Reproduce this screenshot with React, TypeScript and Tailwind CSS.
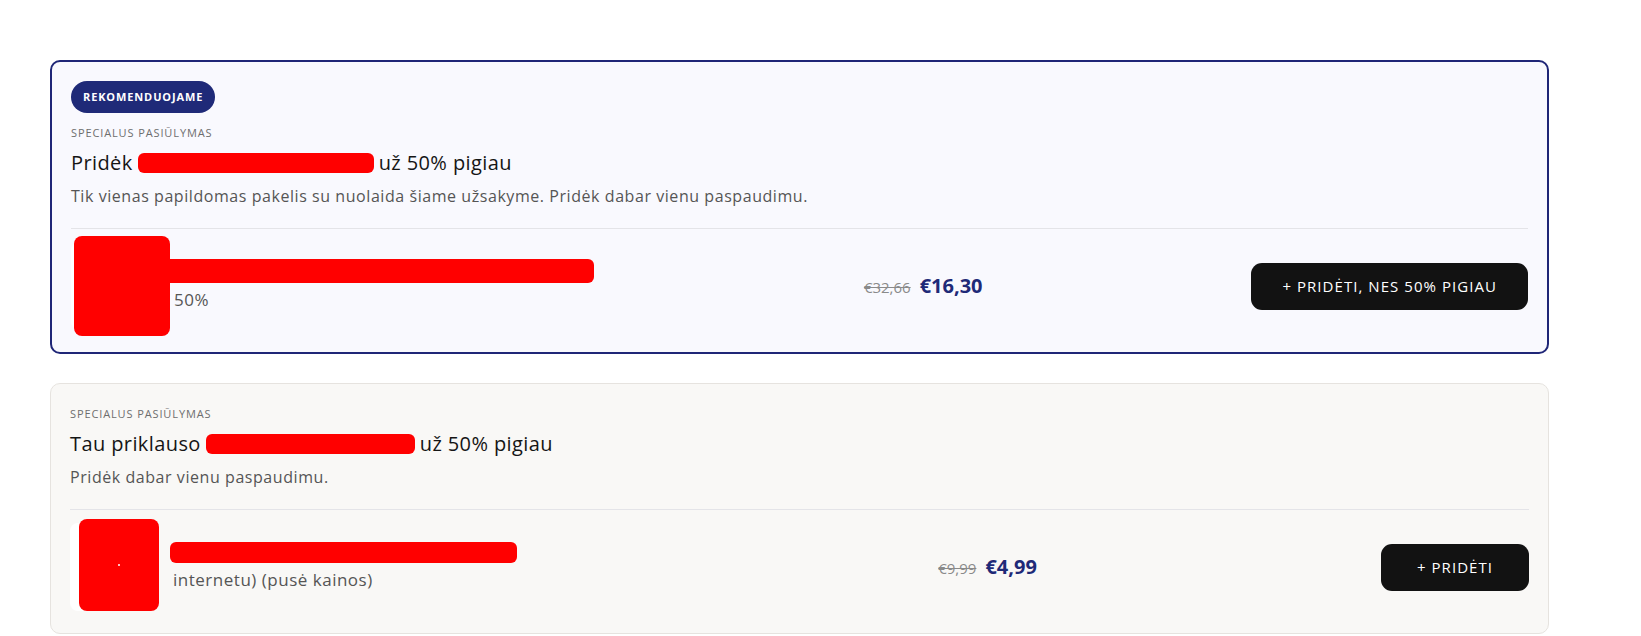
import React from 'react';

type Offer = {
  recommended?: boolean;
  titleStart: string;
  titleEnd: string;
  titleRedact: number;
  description: string;
  subtitle: string;
  nameRedact: { w: number; h: number; ml: number };
  imageRedact: { x: number; y: number; w: number; h: number; dot?: boolean };
  oldPrice: string;
  price: string;
  cta: string;
};

const offers: Offer[] = [
  {
    recommended: true,
    titleStart: 'Pridėk',
    titleEnd: 'už 50% pigiau',
    titleRedact: 236,
    description:
      'Tik vienas papildomas pakelis su nuolaida šiame užsakyme. Pridėk dabar vienu paspaudimu.',
    subtitle: '50%',
    nameRedact: { w: 433, h: 24, ml: -13 },
    imageRedact: { x: 3, y: -6, w: 96, h: 100 },
    oldPrice: '€32,66',
    price: '€16,30',
    cta: '+ Pridėti, nes 50% pigiau',
  },
  {
    titleStart: 'Tau priklauso',
    titleEnd: 'už 50% pigiau',
    titleRedact: 209,
    description: 'Pridėk dabar vienu paspaudimu.',
    subtitle: 'internetu) (pusė kainos)',
    nameRedact: { w: 347, h: 21, ml: -3 },
    imageRedact: { x: 9, y: -4, w: 80, h: 92, dot: true },
    oldPrice: '€9,99',
    price: '€4,99',
    cta: '+ Pridėti',
  },
];

function OfferCard({ offer }: { offer: Offer }) {
  // 1px border on the plain card, so one extra px of padding keeps content aligned
  const box = offer.recommended
    ? 'border-2 border-[#1f2677] bg-[#f9f9fe] pt-[19px]'
    : 'border border-[#e6e3df] bg-[#f9f8f6] pt-[20px]';

  return (
    <div className={`w-[1499px] rounded-[10px] ${box} px-[19px] pb-[22px]`}>
      {offer.recommended && (
        <div className="mb-[10px] flex">
          <span className="flex h-8 items-center rounded-full bg-[#1f2a78] px-3 text-[11px] font-bold uppercase tracking-[0.08em] text-white">
            Rekomenduojame
          </span>
        </div>
      )}
      <div className="text-[11px] uppercase leading-5 tracking-[0.08em] text-[#6e6e6e]">
        Specialus pasiūlymas
      </div>
      <h3 className="mt-[6px] flex items-center text-[20px] leading-7 tracking-[0.02em] text-[#151515]">
        <span>{offer.titleStart}</span>
        <span
          className="mx-[5px] inline-block h-5 rounded-[6px] bg-[#ff0000]"
          style={{ width: offer.titleRedact }}
        />
        <span>{offer.titleEnd}</span>
      </h3>
      <p className="mt-[7px] text-[16px] leading-6 tracking-[0.035em] text-[#555]">{offer.description}</p>

      <div className="mt-[20px] flex items-center justify-between border-t border-[#e4e4e8] pt-[13px]">
        <div className="flex w-[524px] items-center gap-[15px]">
          <div className="relative h-[88px] w-[88px] shrink-0 rounded-[8px] bg-white">
            <div
              className="absolute flex items-center justify-center rounded-[8px] bg-[#ff0000]"
              style={{
                left: offer.imageRedact.x,
                top: offer.imageRedact.y,
                width: offer.imageRedact.w,
                height: offer.imageRedact.h,
              }}
            >
              {offer.imageRedact.dot && <span className="h-[2px] w-[2px] rounded-full bg-white" />}
            </div>
          </div>
          <div className="relative text-[17px] leading-[27px] tracking-[0.03em] text-[#555]">
            <span
              className="relative z-10 block rounded-[6px] bg-[#ff0000]"
              style={{ width: offer.nameRedact.w, height: offer.nameRedact.h, marginLeft: offer.nameRedact.ml }}
            />
            <div className="mt-[3px]">{offer.subtitle}</div>
          </div>
        </div>

        <div className="flex items-baseline gap-[9px]">
          <span className="text-[15px] text-[#8a8a8a] line-through">{offer.oldPrice}</span>
          <span className="text-[20px] font-bold text-[#1f2a78]">{offer.price}</span>
        </div>

        <button className="h-[47px] min-w-[148px] rounded-[11px] bg-[#121212] px-[31px] text-[15px] uppercase tracking-[0.07em] text-white">
          {offer.cta}
        </button>
      </div>
    </div>
  );
}

export default function App() {
  return (
    <main
      className="min-h-screen bg-white pl-[50px] pt-[60px]"
      style={{ fontFamily: '"Open Sans", "Noto Sans", sans-serif' }}
    >
      <div className="flex flex-col gap-[29px]">
        {offers.map((o) => (
          <OfferCard key={o.cta} offer={o} />
        ))}
      </div>
    </main>
  );
}
